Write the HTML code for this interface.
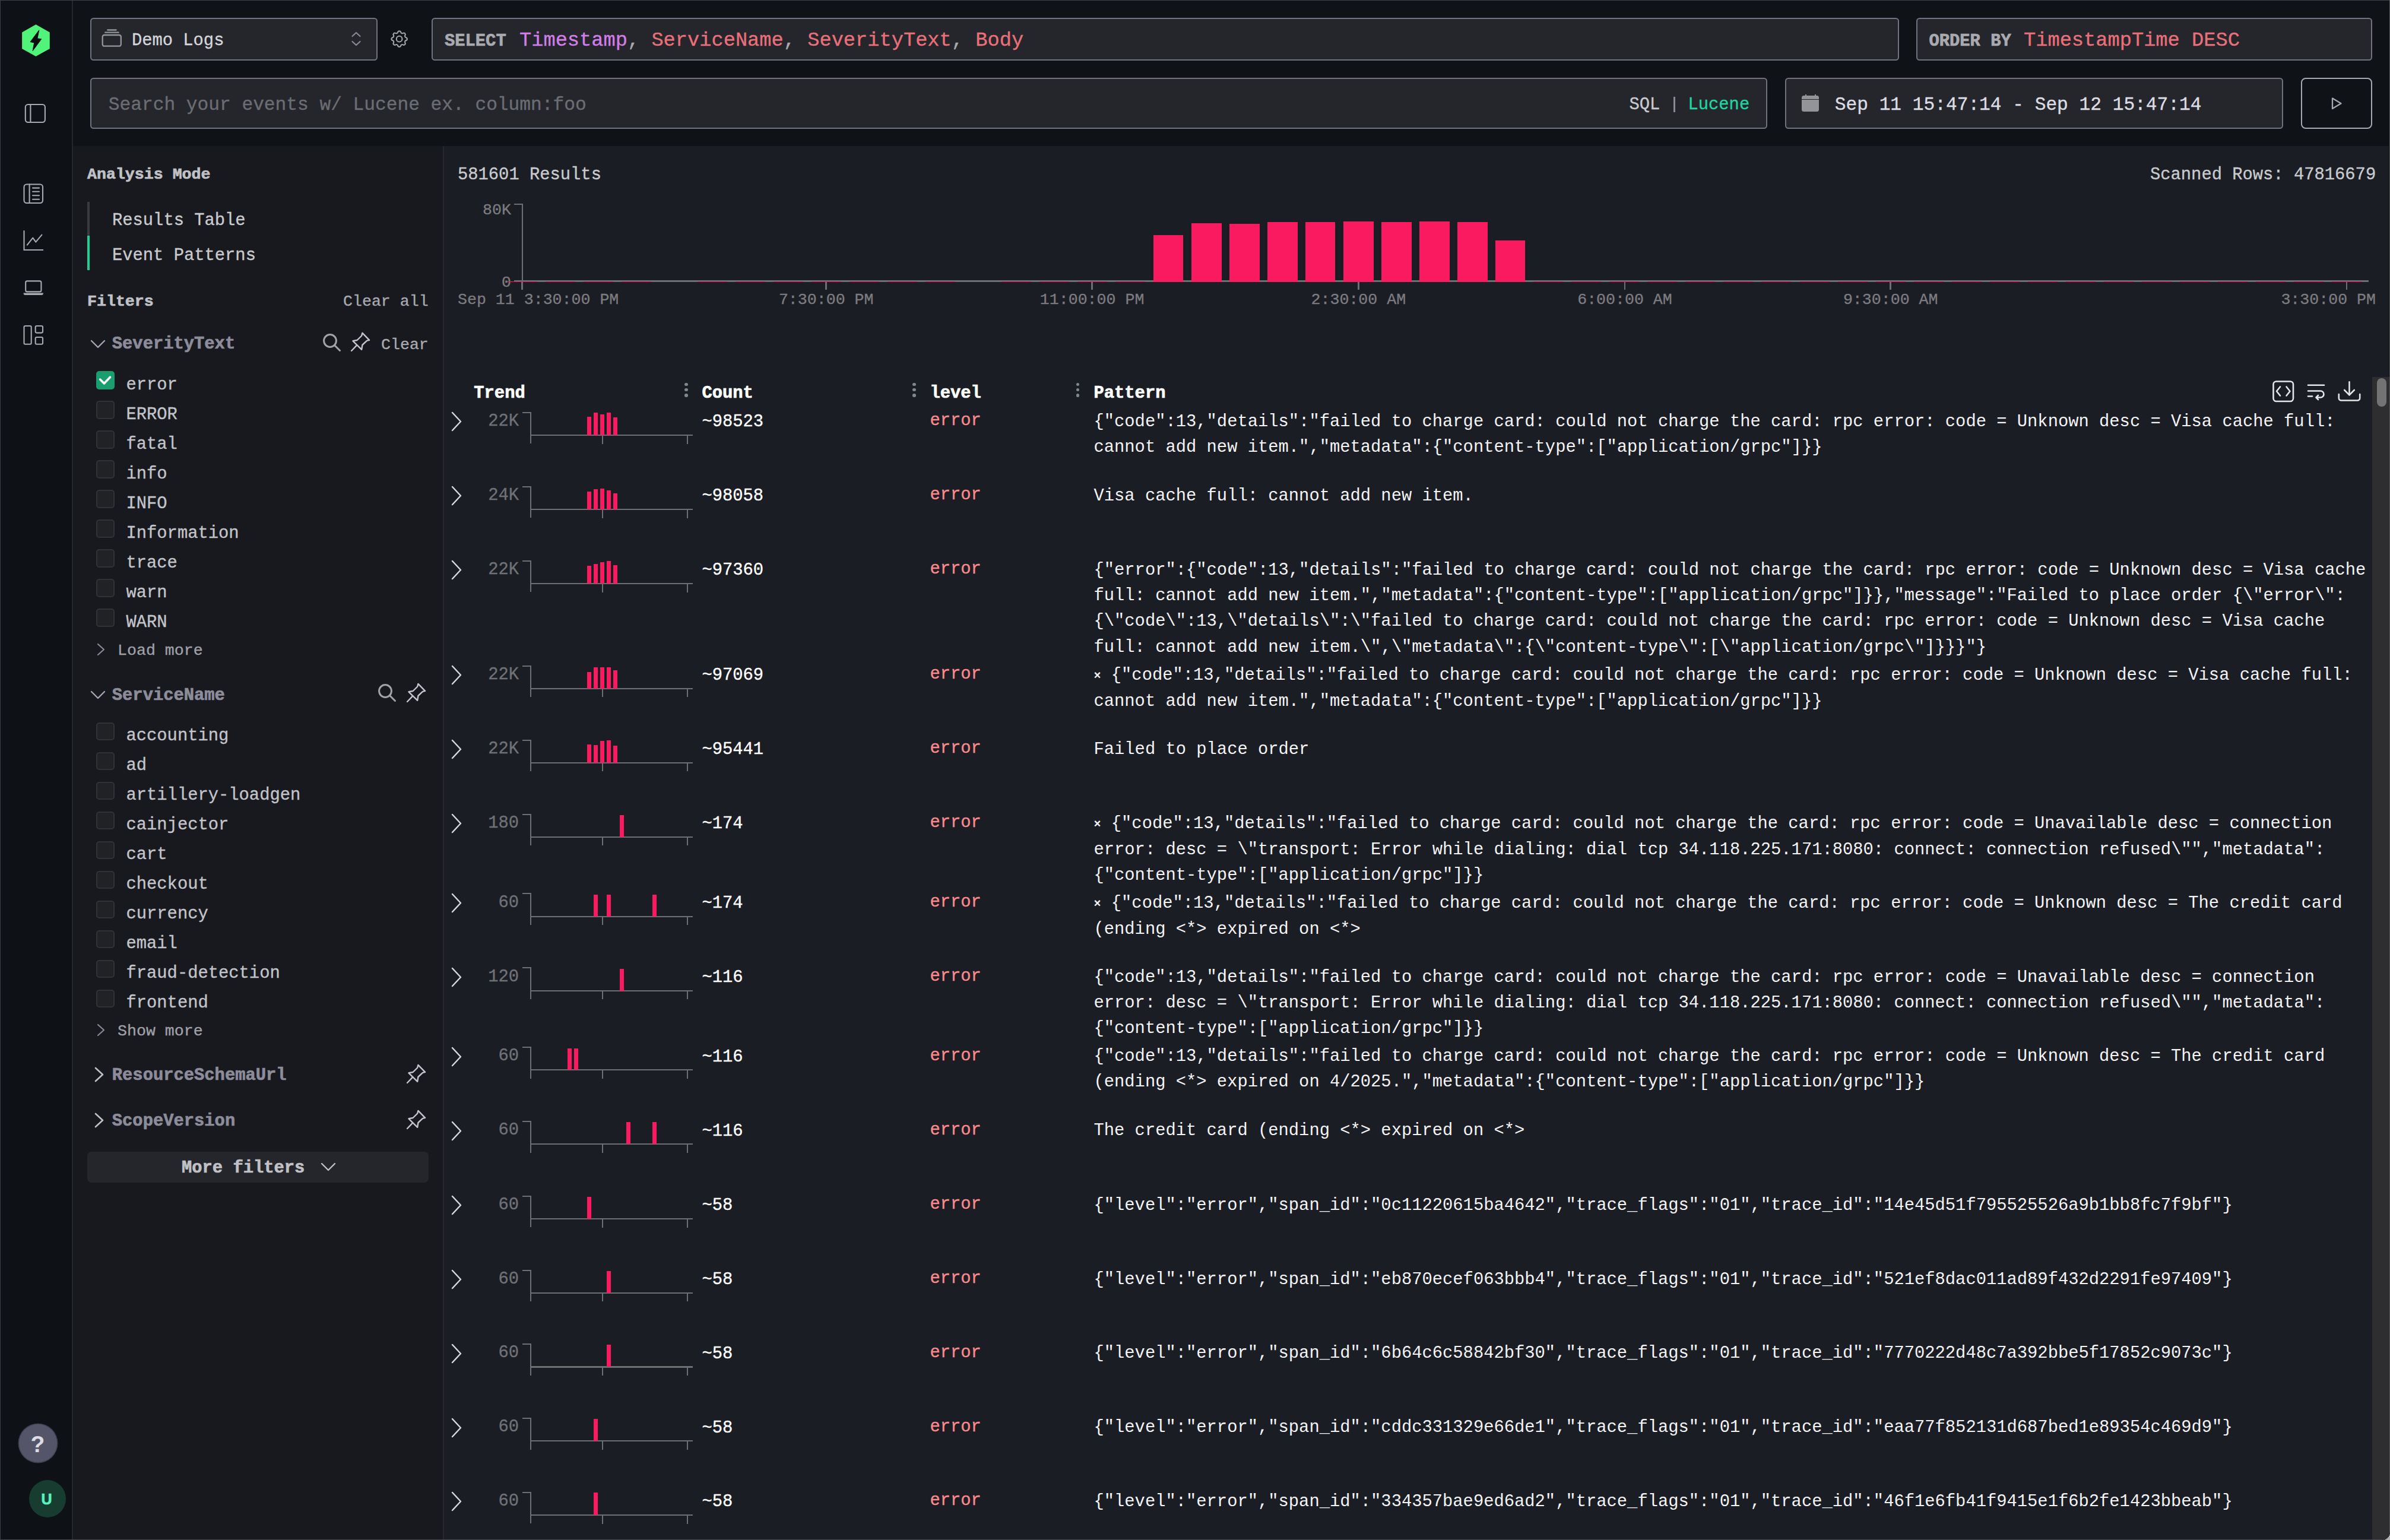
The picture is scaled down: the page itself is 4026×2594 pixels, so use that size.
<!DOCTYPE html><html><head><meta charset="utf-8"><style>*{margin:0;padding:0}html,body{width:4026px;height:2594px;overflow:hidden;background:#0e1116}
.t{position:absolute;white-space:pre}.r{position:absolute}svg.r{overflow:visible}</style></head><body><div class="r" style="left:0.00px;top:0.00px;width:121.00px;height:2594.00px;background:#0e1116"></div><div class="r" style="left:121.00px;top:0.00px;width:2.00px;height:2594.00px;background:#25272c"></div><svg class="r" style="left:30.00px;top:36.00px;" width="60.00" height="64.00" viewBox="0 0 60 64"><polygon points="30.4,6.1 53,19 53,45.7 30.4,58 7.9,45.7 7.9,19" fill="#50f47a" stroke="#50f47a" stroke-width="1.5" stroke-linejoin="round"/><polygon points="35.8,14.8 32.9,28.8 39.7,29.8 25.1,49.6 27.7,35.9 21,34.6" fill="#0b0d10" stroke="#0b0d10" stroke-width="1" stroke-linejoin="round"/></svg><svg class="r" style="left:30.00px;top:160.00px;" width="60.00" height="60.00" viewBox="0 0 60 60"><rect x="12.8" y="16" width="33.1" height="30" rx="4.5" fill="none" stroke="#a9aab1" stroke-width="2.1" stroke-linecap="round" stroke-linejoin="round"/><line x1="21.4" y1="16" x2="21.4" y2="46" fill="none" stroke="#a9aab1" stroke-width="2.1" stroke-linecap="round" stroke-linejoin="round"/></svg><svg class="r" style="left:30.00px;top:300.00px;" width="60.00" height="60.00" viewBox="0 0 60 60"><rect x="10.5" y="10.5" width="31.5" height="31.5" rx="4.5" fill="none" stroke="#a9aab1" stroke-width="2.1" stroke-linecap="round" stroke-linejoin="round"/><line x1="19.6" y1="10.5" x2="19.6" y2="42" fill="none" stroke="#a9aab1" stroke-width="2.1" stroke-linecap="round" stroke-linejoin="round"/><line x1="25" y1="16.6" x2="36" y2="16.6" fill="none" stroke="#a9aab1" stroke-width="2.1" stroke-linecap="round" stroke-linejoin="round"/><line x1="25" y1="22.8" x2="36" y2="22.8" fill="none" stroke="#a9aab1" stroke-width="2.1" stroke-linecap="round" stroke-linejoin="round"/><line x1="25" y1="29.3" x2="36" y2="29.3" fill="none" stroke="#a9aab1" stroke-width="2.1" stroke-linecap="round" stroke-linejoin="round"/><line x1="25" y1="35.7" x2="36" y2="35.7" fill="none" stroke="#a9aab1" stroke-width="2.1" stroke-linecap="round" stroke-linejoin="round"/></svg><svg class="r" style="left:30.00px;top:380.00px;" width="60.00" height="60.00" viewBox="0 0 60 60"><polyline points="10.5,8.3 10.5,41 43,41" fill="none" stroke="#a9aab1" stroke-width="2.1" stroke-linecap="butt" stroke-linejoin="miter"/><polyline points="15.8,32.6 25.3,20.6 30.3,27.6 40.4,15.6" fill="none" stroke="#a9aab1" stroke-width="2.1" stroke-linecap="round" stroke-linejoin="round"/></svg><svg class="r" style="left:30.00px;top:460.00px;" width="60.00" height="60.00" viewBox="0 0 60 60"><rect x="13.2" y="13.4" width="26.2" height="18" rx="2.5" fill="none" stroke="#a9aab1" stroke-width="2.1" stroke-linecap="round" stroke-linejoin="round"/><path d="M9.5 33.5 H43 Q43 37 40 37 H12.5 Q9.5 37 9.5 33.5 Z" fill="#a9aab1"/></svg><svg class="r" style="left:30.00px;top:540.00px;" width="60.00" height="60.00" viewBox="0 0 60 60"><rect x="10.5" y="9" width="12.2" height="30.8" rx="2" fill="none" stroke="#a9aab1" stroke-width="2.1" stroke-linecap="round" stroke-linejoin="round"/><rect x="29.7" y="9" width="12.3" height="11.6" rx="2" fill="none" stroke="#a9aab1" stroke-width="2.1" stroke-linecap="round" stroke-linejoin="round"/><rect x="29.7" y="28" width="12.3" height="11.8" rx="2" fill="none" stroke="#a9aab1" stroke-width="2.1" stroke-linecap="round" stroke-linejoin="round"/></svg><div class="r" style="left:31.50px;top:2398.50px;width:64.00px;height:64.00px;background:#55556a;border-radius:50%;box-shadow:0 0 0 1.5px #3e3e4c"></div><div class="t" style="left:51.50px;top:2412.92px;font-size:39px;line-height:39px;color:#dcdce4;font-weight:700;font-family:'Liberation Sans', sans-serif;-webkit-text-stroke:0px;">?</div><div class="r" style="left:49.00px;top:2493.00px;width:62.00px;height:63.00px;background:#173d31;border-radius:50%"></div><div class="t" style="left:69.50px;top:2512.85px;font-size:25px;line-height:25px;color:#5cf2c0;font-weight:700;font-family:'Liberation Sans', sans-serif;-webkit-text-stroke:0.7px currentColor;">U</div><div class="r" style="left:123.00px;top:0.00px;width:3903.00px;height:246.00px;background:#0f1217"></div><div class="r" style="left:152.00px;top:30.00px;width:484.00px;height:72.00px;background:#25262b;border:2px solid #72717f;border-radius:5.5px;box-sizing:border-box"></div><svg class="r" style="left:160.00px;top:40.00px;" width="55.00" height="52.00" viewBox="0 0 55 52"><rect x="12.7" y="19" width="31.1" height="18.7" rx="3" fill="none" stroke="#939699" stroke-width="2.3" stroke-linecap="round" stroke-linejoin="round"/><line x1="17.2" y1="14.7" x2="39.7" y2="14.7" fill="none" stroke="#939699" stroke-width="2.3" stroke-linecap="round" stroke-linejoin="round"/><line x1="21.2" y1="10.5" x2="35.6" y2="10.5" fill="none" stroke="#939699" stroke-width="2.3" stroke-linecap="round" stroke-linejoin="round"/></svg><div class="t" style="left:221.90px;top:54.94px;font-size:28.8px;line-height:28.8px;color:#d4d5d9;font-weight:400;font-family:'Liberation Mono', monospace;-webkit-text-stroke:0.35px currentColor;">Demo Logs</div><svg class="r" style="left:585.00px;top:50.00px;" width="30.00" height="32.00" viewBox="0 0 30 32"><polyline points="8.5,11 15,5 21.5,11" fill="none" stroke="#8a8b92" stroke-width="2.2" stroke-linecap="round" stroke-linejoin="round"/><polyline points="8.5,20 15,26 21.5,20" fill="none" stroke="#8a8b92" stroke-width="2.2" stroke-linecap="round" stroke-linejoin="round"/></svg><svg class="r" style="left:654.60px;top:47.86px;" width="36.00" height="36.00" viewBox="0 0 36 36"><g transform="scale(1.47)"><path d="M10.325 4.317c.426 -1.756 2.924 -1.756 3.35 0a1.724 1.724 0 0 0 2.573 1.066c1.543 -.94 3.31 .826 2.37 2.37a1.724 1.724 0 0 0 1.065 2.572c1.756 .426 1.756 2.924 0 3.35a1.724 1.724 0 0 0 -1.066 2.573c.94 1.543 -.826 3.31 -2.37 2.37a1.724 1.724 0 0 0 -2.572 1.065c-.426 1.756 -2.924 1.756 -3.35 0a1.724 1.724 0 0 0 -2.573 -1.066c-1.543 .94 -3.31 -.826 -2.37 -2.37a1.724 1.724 0 0 0 -1.065 -2.572c-1.756 -.426 -1.756 -2.924 0 -3.35a1.724 1.724 0 0 0 1.066 -2.573c-.94 -1.543 .826 -3.31 2.37 -2.37c1 .608 2.296 .07 2.572 -1.065z" fill="none" stroke="#a2a3a9" stroke-width="1.45" stroke-linejoin="round"/><circle cx="12" cy="12" r="3.3" fill="none" stroke="#a2a3a9" stroke-width="1.45"/></g></svg><div class="r" style="left:727.00px;top:30.00px;width:2472.00px;height:72.00px;background:#25262b;border:2px solid #72717f;border-radius:5.5px;box-sizing:border-box"></div><div class="t" style="left:749.00px;top:55.94px;font-size:28.8px;line-height:28.8px;color:#a9aab0;font-weight:700;font-family:'Liberation Mono', monospace;-webkit-text-stroke:0.7px currentColor;">SELECT</div><div class="t" style="left:875.00px;top:52.18px;font-size:33.7px;line-height:33.7px;color:#c9cacd;font-weight:400;font-family:'Liberation Mono', monospace;-webkit-text-stroke:0.35px currentColor;"><span style="color:#d27ee8">Timestamp</span><span style="color:#a9aab0">,</span> <span style="color:#e8707a">ServiceName</span><span style="color:#a9aab0">,</span> <span style="color:#e8707a">SeverityText</span><span style="color:#a9aab0">,</span> <span style="color:#e8707a">Body</span></div><div class="r" style="left:3228.00px;top:30.00px;width:768.00px;height:72.00px;background:#25262b;border:2px solid #72717f;border-radius:5.5px;box-sizing:border-box"></div><div class="t" style="left:3249.50px;top:55.94px;font-size:28.8px;line-height:28.8px;color:#a9aab0;font-weight:700;font-family:'Liberation Mono', monospace;-webkit-text-stroke:0.7px currentColor;">ORDER BY</div><div class="t" style="left:3409.00px;top:52.18px;font-size:33.7px;line-height:33.7px;color:#e8707a;font-weight:400;font-family:'Liberation Mono', monospace;-webkit-text-stroke:0.35px currentColor;">TimestampTime DESC</div><div class="r" style="left:152.00px;top:131.00px;width:2825.00px;height:86.00px;background:#25262b;border:2px solid #72717f;border-radius:5.5px;box-sizing:border-box"></div><div class="t" style="left:182.84px;top:160.80px;font-size:31.2px;line-height:31.2px;color:#6b6d74;font-weight:400;font-family:'Liberation Mono', monospace;-webkit-text-stroke:0.35px currentColor;">Search your events w/ Lucene ex. column:foo</div><div class="t" style="left:2744.50px;top:163.14px;font-size:28.8px;line-height:28.8px;color:#c9cacd;font-weight:400;font-family:'Liberation Mono', monospace;-webkit-text-stroke:0.35px currentColor;">SQL</div><div class="r" style="left:2819.10px;top:162.50px;width:2.60px;height:26.20px;background:#8a8b92"></div><div class="t" style="left:2843.50px;top:163.14px;font-size:28.8px;line-height:28.8px;color:#1fd6a0;font-weight:400;font-family:'Liberation Mono', monospace;-webkit-text-stroke:0.35px currentColor;">Lucene</div><div class="r" style="left:3007.00px;top:131.00px;width:839.00px;height:86.00px;background:#25262b;border:2px solid #72717f;border-radius:5.5px;box-sizing:border-box"></div><div class="r" style="left:3035.30px;top:160.80px;width:28.90px;height:27.20px;background:#939497;border-radius:3.5px"></div><div class="r" style="left:3035.30px;top:166.90px;width:28.90px;height:1.30px;background:#25262b"></div><div class="r" style="left:3041.00px;top:158.80px;width:1.60px;height:3.00px;background:#939497"></div><div class="r" style="left:3057.30px;top:158.80px;width:1.60px;height:3.00px;background:#939497"></div><div class="t" style="left:3090.80px;top:161.30px;font-size:31.2px;line-height:31.2px;color:#dcdde3;font-weight:400;font-family:'Liberation Mono', monospace;-webkit-text-stroke:0.35px currentColor;">Sep 11 15:47:14 - Sep 12 15:47:14</div><div class="r" style="left:3876.00px;top:131.00px;width:120.00px;height:86.00px;background:#0f1217;border:2px solid #a8a9b0;border-radius:8px;box-sizing:border-box"></div><svg class="r" style="left:3920.00px;top:160.00px;" width="30.00" height="30.00" viewBox="0 0 30 30"><polygon points="9,5.6 23.5,14.3 9,23" fill="none" stroke="#a8a9b0" stroke-width="2.3" stroke-linejoin="round"/></svg><div class="r" style="left:123.00px;top:246.00px;width:623.00px;height:2348.00px;background:#18191e"></div><div class="r" style="left:746.00px;top:246.00px;width:2.00px;height:2348.00px;background:#26272c"></div><div class="t" style="left:147.00px;top:280.62px;font-size:26.6px;line-height:26.6px;color:#c0c1c6;font-weight:700;font-family:'Liberation Mono', monospace;-webkit-text-stroke:0.7px currentColor;">Analysis Mode</div><div class="r" style="left:147.00px;top:340.00px;width:4.00px;height:57.00px;background:#3a3b40"></div><div class="r" style="left:147.00px;top:397.00px;width:4.00px;height:58.00px;background:#1fcf8f"></div><div class="t" style="left:189.00px;top:357.94px;font-size:28.8px;line-height:28.8px;color:#c9cacd;font-weight:400;font-family:'Liberation Mono', monospace;-webkit-text-stroke:0.35px currentColor;">Results Table</div><div class="t" style="left:189.00px;top:416.64px;font-size:28.8px;line-height:28.8px;color:#c9cacd;font-weight:400;font-family:'Liberation Mono', monospace;-webkit-text-stroke:0.35px currentColor;">Event Patterns</div><div class="t" style="left:147.00px;top:494.62px;font-size:26.6px;line-height:26.6px;color:#c0c1c6;font-weight:700;font-family:'Liberation Mono', monospace;-webkit-text-stroke:0.7px currentColor;">Filters</div><div class="t" style="left:578.00px;top:494.62px;font-size:26.6px;line-height:26.6px;color:#a9aab0;font-weight:400;font-family:'Liberation Mono', monospace;-webkit-text-stroke:0.35px currentColor;">Clear all</div><svg class="r" style="left:152.00px;top:572.00px;" width="26.00" height="16.00" viewBox="0 0 26 16"><polyline points="2,2 13,13 24,2" fill="none" stroke="#a6a7ae" stroke-width="2.4" stroke-linecap="round" stroke-linejoin="round"/></svg><div class="t" style="left:188.80px;top:565.94px;font-size:28.8px;line-height:28.8px;color:#8c8c9a;font-weight:700;font-family:'Liberation Mono', monospace;-webkit-text-stroke:0.7px currentColor;">SeverityText</div><svg class="r" style="left:541.90px;top:560.10px;" width="36.00" height="36.00" viewBox="0 0 36 36"><circle cx="14" cy="14" r="10.4" fill="none" stroke="#a2a3a9" stroke-width="3"/><line x1="21.5" y1="21.5" x2="30.5" y2="30.5" stroke="#a2a3a9" stroke-width="3" stroke-linecap="round"/></svg><svg class="r" style="left:585.90px;top:555.40px;" width="40.00" height="40.00" viewBox="0 0 40 40"><polygon points="8.50,19.30 15.60,18.00 23.20,10.50 24.40,5.90 36.10,17.80 32.00,18.90 24.40,26.00 23.20,33.90" fill="none" stroke="#c4c5cc" stroke-width="2.4" stroke-linejoin="round"/><line x1="15.20" y1="26.40" x2="6" y2="36" stroke="#c4c5cc" stroke-width="2.4" stroke-linecap="round"/></svg><div class="t" style="left:642.00px;top:567.62px;font-size:26.6px;line-height:26.6px;color:#a9aab0;font-weight:400;font-family:'Liberation Mono', monospace;-webkit-text-stroke:0.35px currentColor;">Clear</div><div class="r" style="left:162.20px;top:625.30px;width:30.40px;height:30.40px;background:#1a9e70;border-radius:5px"></div><svg class="r" style="left:162.20px;top:625.30px;" width="30.40" height="30.40" viewBox="0 0 30.4 30.4"><polyline points="6.6,14.1 13.4,20.9 23.5,10.2" fill="none" stroke="#fff" stroke-width="3.6" stroke-linecap="round" stroke-linejoin="round"/></svg><div class="t" style="left:212.50px;top:634.64px;font-size:28.8px;line-height:28.8px;color:#c3c4c9;font-weight:400;font-family:'Liberation Mono', monospace;-webkit-text-stroke:0.35px currentColor;">error</div><div class="r" style="left:162.20px;top:675.30px;width:30.40px;height:30.40px;background:#212226;border:2px solid #303236;border-radius:5px;box-sizing:border-box"></div><div class="t" style="left:212.50px;top:684.64px;font-size:28.8px;line-height:28.8px;color:#c3c4c9;font-weight:400;font-family:'Liberation Mono', monospace;-webkit-text-stroke:0.35px currentColor;">ERROR</div><div class="r" style="left:162.20px;top:725.30px;width:30.40px;height:30.40px;background:#212226;border:2px solid #303236;border-radius:5px;box-sizing:border-box"></div><div class="t" style="left:212.50px;top:734.64px;font-size:28.8px;line-height:28.8px;color:#c3c4c9;font-weight:400;font-family:'Liberation Mono', monospace;-webkit-text-stroke:0.35px currentColor;">fatal</div><div class="r" style="left:162.20px;top:775.30px;width:30.40px;height:30.40px;background:#212226;border:2px solid #303236;border-radius:5px;box-sizing:border-box"></div><div class="t" style="left:212.50px;top:784.64px;font-size:28.8px;line-height:28.8px;color:#c3c4c9;font-weight:400;font-family:'Liberation Mono', monospace;-webkit-text-stroke:0.35px currentColor;">info</div><div class="r" style="left:162.20px;top:825.30px;width:30.40px;height:30.40px;background:#212226;border:2px solid #303236;border-radius:5px;box-sizing:border-box"></div><div class="t" style="left:212.50px;top:834.64px;font-size:28.8px;line-height:28.8px;color:#c3c4c9;font-weight:400;font-family:'Liberation Mono', monospace;-webkit-text-stroke:0.35px currentColor;">INFO</div><div class="r" style="left:162.20px;top:875.30px;width:30.40px;height:30.40px;background:#212226;border:2px solid #303236;border-radius:5px;box-sizing:border-box"></div><div class="t" style="left:212.50px;top:884.64px;font-size:28.8px;line-height:28.8px;color:#c3c4c9;font-weight:400;font-family:'Liberation Mono', monospace;-webkit-text-stroke:0.35px currentColor;">Information</div><div class="r" style="left:162.20px;top:925.30px;width:30.40px;height:30.40px;background:#212226;border:2px solid #303236;border-radius:5px;box-sizing:border-box"></div><div class="t" style="left:212.50px;top:934.64px;font-size:28.8px;line-height:28.8px;color:#c3c4c9;font-weight:400;font-family:'Liberation Mono', monospace;-webkit-text-stroke:0.35px currentColor;">trace</div><div class="r" style="left:162.20px;top:975.30px;width:30.40px;height:30.40px;background:#212226;border:2px solid #303236;border-radius:5px;box-sizing:border-box"></div><div class="t" style="left:212.50px;top:984.64px;font-size:28.8px;line-height:28.8px;color:#c3c4c9;font-weight:400;font-family:'Liberation Mono', monospace;-webkit-text-stroke:0.35px currentColor;">warn</div><div class="r" style="left:162.20px;top:1025.30px;width:30.40px;height:30.40px;background:#212226;border:2px solid #303236;border-radius:5px;box-sizing:border-box"></div><div class="t" style="left:212.50px;top:1034.64px;font-size:28.8px;line-height:28.8px;color:#c3c4c9;font-weight:400;font-family:'Liberation Mono', monospace;-webkit-text-stroke:0.35px currentColor;">WARN</div><svg class="r" style="left:163.00px;top:1083.00px;" width="14.00" height="22.00" viewBox="0 0 14 22"><polyline points="2,2 12,11.0 2,20" fill="none" stroke="#8a8b92" stroke-width="2.2" stroke-linecap="round" stroke-linejoin="round"/></svg><div class="t" style="left:198.00px;top:1082.62px;font-size:26.6px;line-height:26.6px;color:#a0a1a8;font-weight:400;font-family:'Liberation Mono', monospace;-webkit-text-stroke:0.35px currentColor;">Load more</div><svg class="r" style="left:152.00px;top:1163.00px;" width="26.00" height="16.00" viewBox="0 0 26 16"><polyline points="2,2 13,13 24,2" fill="none" stroke="#a6a7ae" stroke-width="2.4" stroke-linecap="round" stroke-linejoin="round"/></svg><div class="t" style="left:188.80px;top:1157.94px;font-size:28.8px;line-height:28.8px;color:#8c8c9a;font-weight:700;font-family:'Liberation Mono', monospace;-webkit-text-stroke:0.7px currentColor;">ServiceName</div><svg class="r" style="left:634.80px;top:1150.40px;" width="36.00" height="36.00" viewBox="0 0 36 36"><circle cx="14" cy="14" r="10.4" fill="none" stroke="#a2a3a9" stroke-width="3"/><line x1="21.5" y1="21.5" x2="30.5" y2="30.5" stroke="#a2a3a9" stroke-width="3" stroke-linecap="round"/></svg><svg class="r" style="left:680.10px;top:1145.70px;" width="40.00" height="40.00" viewBox="0 0 40 40"><polygon points="8.50,19.30 15.60,18.00 23.20,10.50 24.40,5.90 36.10,17.80 32.00,18.90 24.40,26.00 23.20,33.90" fill="none" stroke="#c4c5cc" stroke-width="2.4" stroke-linejoin="round"/><line x1="15.20" y1="26.40" x2="6" y2="36" stroke="#c4c5cc" stroke-width="2.4" stroke-linecap="round"/></svg><div class="r" style="left:162.20px;top:1217.00px;width:30.40px;height:30.40px;background:#212226;border:2px solid #303236;border-radius:5px;box-sizing:border-box"></div><div class="t" style="left:212.50px;top:1226.34px;font-size:28.8px;line-height:28.8px;color:#c3c4c9;font-weight:400;font-family:'Liberation Mono', monospace;-webkit-text-stroke:0.35px currentColor;">accounting</div><div class="r" style="left:162.20px;top:1267.00px;width:30.40px;height:30.40px;background:#212226;border:2px solid #303236;border-radius:5px;box-sizing:border-box"></div><div class="t" style="left:212.50px;top:1276.34px;font-size:28.8px;line-height:28.8px;color:#c3c4c9;font-weight:400;font-family:'Liberation Mono', monospace;-webkit-text-stroke:0.35px currentColor;">ad</div><div class="r" style="left:162.20px;top:1317.00px;width:30.40px;height:30.40px;background:#212226;border:2px solid #303236;border-radius:5px;box-sizing:border-box"></div><div class="t" style="left:212.50px;top:1326.34px;font-size:28.8px;line-height:28.8px;color:#c3c4c9;font-weight:400;font-family:'Liberation Mono', monospace;-webkit-text-stroke:0.35px currentColor;">artillery-loadgen</div><div class="r" style="left:162.20px;top:1367.00px;width:30.40px;height:30.40px;background:#212226;border:2px solid #303236;border-radius:5px;box-sizing:border-box"></div><div class="t" style="left:212.50px;top:1376.34px;font-size:28.8px;line-height:28.8px;color:#c3c4c9;font-weight:400;font-family:'Liberation Mono', monospace;-webkit-text-stroke:0.35px currentColor;">cainjector</div><div class="r" style="left:162.20px;top:1417.00px;width:30.40px;height:30.40px;background:#212226;border:2px solid #303236;border-radius:5px;box-sizing:border-box"></div><div class="t" style="left:212.50px;top:1426.34px;font-size:28.8px;line-height:28.8px;color:#c3c4c9;font-weight:400;font-family:'Liberation Mono', monospace;-webkit-text-stroke:0.35px currentColor;">cart</div><div class="r" style="left:162.20px;top:1467.00px;width:30.40px;height:30.40px;background:#212226;border:2px solid #303236;border-radius:5px;box-sizing:border-box"></div><div class="t" style="left:212.50px;top:1476.34px;font-size:28.8px;line-height:28.8px;color:#c3c4c9;font-weight:400;font-family:'Liberation Mono', monospace;-webkit-text-stroke:0.35px currentColor;">checkout</div><div class="r" style="left:162.20px;top:1517.00px;width:30.40px;height:30.40px;background:#212226;border:2px solid #303236;border-radius:5px;box-sizing:border-box"></div><div class="t" style="left:212.50px;top:1526.34px;font-size:28.8px;line-height:28.8px;color:#c3c4c9;font-weight:400;font-family:'Liberation Mono', monospace;-webkit-text-stroke:0.35px currentColor;">currency</div><div class="r" style="left:162.20px;top:1567.00px;width:30.40px;height:30.40px;background:#212226;border:2px solid #303236;border-radius:5px;box-sizing:border-box"></div><div class="t" style="left:212.50px;top:1576.34px;font-size:28.8px;line-height:28.8px;color:#c3c4c9;font-weight:400;font-family:'Liberation Mono', monospace;-webkit-text-stroke:0.35px currentColor;">email</div><div class="r" style="left:162.20px;top:1617.00px;width:30.40px;height:30.40px;background:#212226;border:2px solid #303236;border-radius:5px;box-sizing:border-box"></div><div class="t" style="left:212.50px;top:1626.34px;font-size:28.8px;line-height:28.8px;color:#c3c4c9;font-weight:400;font-family:'Liberation Mono', monospace;-webkit-text-stroke:0.35px currentColor;">fraud-detection</div><div class="r" style="left:162.20px;top:1667.00px;width:30.40px;height:30.40px;background:#212226;border:2px solid #303236;border-radius:5px;box-sizing:border-box"></div><div class="t" style="left:212.50px;top:1676.34px;font-size:28.8px;line-height:28.8px;color:#c3c4c9;font-weight:400;font-family:'Liberation Mono', monospace;-webkit-text-stroke:0.35px currentColor;">frontend</div><svg class="r" style="left:163.00px;top:1724.00px;" width="14.00" height="22.00" viewBox="0 0 14 22"><polyline points="2,2 12,11.0 2,20" fill="none" stroke="#8a8b92" stroke-width="2.2" stroke-linecap="round" stroke-linejoin="round"/></svg><div class="t" style="left:198.00px;top:1724.12px;font-size:26.6px;line-height:26.6px;color:#a0a1a8;font-weight:400;font-family:'Liberation Mono', monospace;-webkit-text-stroke:0.35px currentColor;">Show more</div><svg class="r" style="left:159.00px;top:1797.00px;" width="16.00" height="26.00" viewBox="0 0 16 26"><polyline points="2,2 14,13.0 2,24" fill="none" stroke="#c0c1c6" stroke-width="2.6" stroke-linecap="round" stroke-linejoin="round"/></svg><div class="t" style="left:188.80px;top:1798.24px;font-size:28.8px;line-height:28.8px;color:#8c8c9a;font-weight:700;font-family:'Liberation Mono', monospace;-webkit-text-stroke:0.7px currentColor;">ResourceSchemaUrl</div><svg class="r" style="left:680.10px;top:1787.60px;" width="40.00" height="40.00" viewBox="0 0 40 40"><polygon points="8.50,19.30 15.60,18.00 23.20,10.50 24.40,5.90 36.10,17.80 32.00,18.90 24.40,26.00 23.20,33.90" fill="none" stroke="#c4c5cc" stroke-width="2.4" stroke-linejoin="round"/><line x1="15.20" y1="26.40" x2="6" y2="36" stroke="#c4c5cc" stroke-width="2.4" stroke-linecap="round"/></svg><svg class="r" style="left:159.00px;top:1874.00px;" width="16.00" height="26.00" viewBox="0 0 16 26"><polyline points="2,2 14,13.0 2,24" fill="none" stroke="#c0c1c6" stroke-width="2.6" stroke-linecap="round" stroke-linejoin="round"/></svg><div class="t" style="left:188.80px;top:1875.14px;font-size:28.8px;line-height:28.8px;color:#8c8c9a;font-weight:700;font-family:'Liberation Mono', monospace;-webkit-text-stroke:0.7px currentColor;">ScopeVersion</div><svg class="r" style="left:680.10px;top:1864.60px;" width="40.00" height="40.00" viewBox="0 0 40 40"><polygon points="8.50,19.30 15.60,18.00 23.20,10.50 24.40,5.90 36.10,17.80 32.00,18.90 24.40,26.00 23.20,33.90" fill="none" stroke="#c4c5cc" stroke-width="2.4" stroke-linejoin="round"/><line x1="15.20" y1="26.40" x2="6" y2="36" stroke="#c4c5cc" stroke-width="2.4" stroke-linecap="round"/></svg><div class="r" style="left:147.00px;top:1939.50px;width:575.00px;height:52.50px;background:#25262b;border-radius:7px"></div><div class="t" style="left:306.00px;top:1953.94px;font-size:28.8px;line-height:28.8px;color:#c0c1c6;font-weight:700;font-family:'Liberation Mono', monospace;-webkit-text-stroke:0.7px currentColor;">More filters</div><svg class="r" style="left:540.00px;top:1958.00px;" width="26.00" height="16.00" viewBox="0 0 26 16"><polyline points="2,2 13,13 24,2" fill="none" stroke="#c0c1c6" stroke-width="2.4" stroke-linecap="round" stroke-linejoin="round"/></svg><div class="r" style="left:748.00px;top:246.00px;width:3276.00px;height:2348.00px;background:#1b1d24"></div><div class="t" style="left:771.00px;top:280.74px;font-size:28.8px;line-height:28.8px;color:#c9cacd;font-weight:400;font-family:'Liberation Mono', monospace;-webkit-text-stroke:0.35px currentColor;">581601 Results</div><div class="t" style="left:3622.00px;top:280.54px;font-size:28.8px;line-height:28.8px;color:#c9cacd;font-weight:400;font-family:'Liberation Mono', monospace;-webkit-text-stroke:0.35px currentColor;">Scanned Rows: 47816679</div><div class="r" style="left:878.80px;top:343.00px;width:2.30px;height:145.00px;background:#6e6f73"></div><div class="r" style="left:865.90px;top:343.00px;width:15.00px;height:2.00px;background:#6e6f73"></div><div class="r" style="left:865.90px;top:472.30px;width:14.00px;height:2.40px;background:#6e6f73"></div><div class="r" style="left:878.60px;top:472.30px;width:3111.40px;height:2.40px;background:#6e6f73"></div><div class="t" style="left:813.00px;top:340.62px;font-size:26.6px;line-height:26.6px;color:#7c7c80;font-weight:400;font-family:'Liberation Mono', monospace;-webkit-text-stroke:0.35px currentColor;">80K</div><div class="t" style="left:845.00px;top:462.62px;font-size:26.6px;line-height:26.6px;color:#7c7c80;font-weight:400;font-family:'Liberation Mono', monospace;-webkit-text-stroke:0.35px currentColor;">0</div><div class="r" style="left:854.50px;top:473.70px;width:50.00px;height:1.40px;background:#ee185c"></div><div class="r" style="left:918.53px;top:473.70px;width:50.00px;height:1.40px;background:#ee185c"></div><div class="r" style="left:982.56px;top:473.70px;width:50.00px;height:1.40px;background:#ee185c"></div><div class="r" style="left:1046.59px;top:473.70px;width:50.00px;height:1.40px;background:#ee185c"></div><div class="r" style="left:1174.65px;top:473.70px;width:50.00px;height:1.40px;background:#ee185c"></div><div class="r" style="left:1238.68px;top:473.70px;width:50.00px;height:1.40px;background:#ee185c"></div><div class="r" style="left:1302.71px;top:473.70px;width:50.00px;height:1.40px;background:#ee185c"></div><div class="r" style="left:1366.74px;top:473.70px;width:50.00px;height:1.40px;background:#ee185c"></div><div class="r" style="left:1430.77px;top:473.70px;width:50.00px;height:1.40px;background:#ee185c"></div><div class="r" style="left:1494.80px;top:473.70px;width:50.00px;height:1.40px;background:#ee185c"></div><div class="r" style="left:1558.83px;top:473.70px;width:50.00px;height:1.40px;background:#ee185c"></div><div class="r" style="left:1686.89px;top:473.70px;width:50.00px;height:1.40px;background:#ee185c"></div><div class="r" style="left:1750.92px;top:473.70px;width:50.00px;height:1.40px;background:#ee185c"></div><div class="r" style="left:1814.95px;top:473.70px;width:50.00px;height:1.40px;background:#ee185c"></div><div class="r" style="left:1878.98px;top:473.70px;width:50.00px;height:1.40px;background:#ee185c"></div><div class="r" style="left:2583.31px;top:473.70px;width:50.00px;height:1.40px;background:#ee185c"></div><div class="r" style="left:2647.34px;top:473.70px;width:50.00px;height:1.40px;background:#ee185c"></div><div class="r" style="left:2711.37px;top:473.70px;width:50.00px;height:1.40px;background:#ee185c"></div><div class="r" style="left:2775.40px;top:473.70px;width:50.00px;height:1.40px;background:#ee185c"></div><div class="r" style="left:2839.43px;top:473.70px;width:50.00px;height:1.40px;background:#ee185c"></div><div class="r" style="left:2903.46px;top:473.70px;width:50.00px;height:1.40px;background:#ee185c"></div><div class="r" style="left:2967.49px;top:473.70px;width:50.00px;height:1.40px;background:#ee185c"></div><div class="r" style="left:3031.52px;top:473.70px;width:50.00px;height:1.40px;background:#ee185c"></div><div class="r" style="left:3095.55px;top:473.70px;width:50.00px;height:1.40px;background:#ee185c"></div><div class="r" style="left:3159.58px;top:473.70px;width:50.00px;height:1.40px;background:#ee185c"></div><div class="r" style="left:3223.61px;top:473.70px;width:50.00px;height:1.40px;background:#ee185c"></div><div class="r" style="left:3287.64px;top:473.70px;width:50.00px;height:1.40px;background:#ee185c"></div><div class="r" style="left:3351.67px;top:473.70px;width:50.00px;height:1.40px;background:#ee185c"></div><div class="r" style="left:3415.70px;top:473.70px;width:50.00px;height:1.40px;background:#ee185c"></div><div class="r" style="left:3479.73px;top:473.70px;width:50.00px;height:1.40px;background:#ee185c"></div><div class="r" style="left:3543.76px;top:473.70px;width:50.00px;height:1.40px;background:#ee185c"></div><div class="r" style="left:3607.79px;top:473.70px;width:50.00px;height:1.40px;background:#ee185c"></div><div class="r" style="left:3671.82px;top:473.70px;width:50.00px;height:1.40px;background:#ee185c"></div><div class="r" style="left:3735.85px;top:473.70px;width:50.00px;height:1.40px;background:#ee185c"></div><div class="r" style="left:3799.88px;top:473.70px;width:50.00px;height:1.40px;background:#ee185c"></div><div class="r" style="left:3863.91px;top:473.70px;width:50.00px;height:1.40px;background:#ee185c"></div><div class="r" style="left:3927.94px;top:473.70px;width:50.00px;height:1.40px;background:#ee185c"></div><div class="r" style="left:1942.80px;top:395.90px;width:50.50px;height:78.70px;background:#f91a5f"></div><div class="r" style="left:2007.10px;top:375.80px;width:50.50px;height:98.80px;background:#f91a5f"></div><div class="r" style="left:2071.00px;top:376.80px;width:50.50px;height:97.80px;background:#f91a5f"></div><div class="r" style="left:2135.00px;top:373.80px;width:50.50px;height:100.80px;background:#f91a5f"></div><div class="r" style="left:2198.90px;top:373.80px;width:50.50px;height:100.80px;background:#f91a5f"></div><div class="r" style="left:2263.20px;top:372.80px;width:50.50px;height:101.80px;background:#f91a5f"></div><div class="r" style="left:2327.10px;top:373.80px;width:50.50px;height:100.80px;background:#f91a5f"></div><div class="r" style="left:2391.00px;top:372.80px;width:50.50px;height:101.80px;background:#f91a5f"></div><div class="r" style="left:2455.00px;top:373.80px;width:50.50px;height:100.80px;background:#f91a5f"></div><div class="r" style="left:2518.90px;top:404.90px;width:50.50px;height:69.70px;background:#f91a5f"></div><div class="r" style="left:878.30px;top:475.00px;width:2.70px;height:13.00px;background:#6e6f73"></div><div class="t" style="left:771.00px;top:491.62px;font-size:26.6px;line-height:26.6px;color:#7c7c80;font-weight:400;font-family:'Liberation Mono', monospace;-webkit-text-stroke:0.35px currentColor;">Sep 11 3:30:00 PM</div><div class="r" style="left:1390.40px;top:475.00px;width:2.70px;height:13.00px;background:#6e6f73"></div><div class="t" style="left:1311.90px;top:491.62px;font-size:26.6px;line-height:26.6px;color:#7c7c80;font-weight:400;font-family:'Liberation Mono', monospace;-webkit-text-stroke:0.35px currentColor;">7:30:00 PM</div><div class="r" style="left:1838.30px;top:475.00px;width:2.70px;height:13.00px;background:#6e6f73"></div><div class="t" style="left:1751.82px;top:491.62px;font-size:26.6px;line-height:26.6px;color:#7c7c80;font-weight:400;font-family:'Liberation Mono', monospace;-webkit-text-stroke:0.35px currentColor;">11:00:00 PM</div><div class="r" style="left:2287.00px;top:475.00px;width:2.70px;height:13.00px;background:#6e6f73"></div><div class="t" style="left:2208.50px;top:491.62px;font-size:26.6px;line-height:26.6px;color:#7c7c80;font-weight:400;font-family:'Liberation Mono', monospace;-webkit-text-stroke:0.35px currentColor;">2:30:00 AM</div><div class="r" style="left:2735.70px;top:475.00px;width:2.70px;height:13.00px;background:#6e6f73"></div><div class="t" style="left:2657.20px;top:491.62px;font-size:26.6px;line-height:26.6px;color:#7c7c80;font-weight:400;font-family:'Liberation Mono', monospace;-webkit-text-stroke:0.35px currentColor;">6:00:00 AM</div><div class="r" style="left:3183.40px;top:475.00px;width:2.70px;height:13.00px;background:#6e6f73"></div><div class="t" style="left:3104.90px;top:491.62px;font-size:26.6px;line-height:26.6px;color:#7c7c80;font-weight:400;font-family:'Liberation Mono', monospace;-webkit-text-stroke:0.35px currentColor;">9:30:00 AM</div><div class="r" style="left:3951.70px;top:475.00px;width:2.70px;height:13.00px;background:#6e6f73"></div><div class="t" style="left:3842.40px;top:491.62px;font-size:26.6px;line-height:26.6px;color:#7c7c80;font-weight:400;font-family:'Liberation Mono', monospace;-webkit-text-stroke:0.35px currentColor;">3:30:00 PM</div><div class="t" style="left:798.30px;top:648.94px;font-size:28.8px;line-height:28.8px;color:#ffffff;font-weight:700;font-family:'Liberation Mono', monospace;-webkit-text-stroke:0.7px currentColor;">Trend</div><div class="t" style="left:1182.50px;top:648.94px;font-size:28.8px;line-height:28.8px;color:#ffffff;font-weight:700;font-family:'Liberation Mono', monospace;-webkit-text-stroke:0.7px currentColor;">Count</div><div class="t" style="left:1566.50px;top:648.94px;font-size:28.8px;line-height:28.8px;color:#ffffff;font-weight:700;font-family:'Liberation Mono', monospace;-webkit-text-stroke:0.7px currentColor;">level</div><div class="t" style="left:1842.50px;top:648.94px;font-size:28.8px;line-height:28.8px;color:#ffffff;font-weight:700;font-family:'Liberation Mono', monospace;-webkit-text-stroke:0.7px currentColor;">Pattern</div><div class="r" style="left:1153.20px;top:644.80px;width:5.60px;height:5.60px;background:#80868f;border-radius:50%"></div><div class="r" style="left:1153.20px;top:653.90px;width:5.60px;height:5.60px;background:#80868f;border-radius:50%"></div><div class="r" style="left:1153.20px;top:663.00px;width:5.60px;height:5.60px;background:#80868f;border-radius:50%"></div><div class="r" style="left:1537.20px;top:644.80px;width:5.60px;height:5.60px;background:#80868f;border-radius:50%"></div><div class="r" style="left:1537.20px;top:653.90px;width:5.60px;height:5.60px;background:#80868f;border-radius:50%"></div><div class="r" style="left:1537.20px;top:663.00px;width:5.60px;height:5.60px;background:#80868f;border-radius:50%"></div><div class="r" style="left:1812.80px;top:644.80px;width:5.60px;height:5.60px;background:#80868f;border-radius:50%"></div><div class="r" style="left:1812.80px;top:653.90px;width:5.60px;height:5.60px;background:#80868f;border-radius:50%"></div><div class="r" style="left:1812.80px;top:663.00px;width:5.60px;height:5.60px;background:#80868f;border-radius:50%"></div><svg class="r" style="left:3820.00px;top:638.00px;overflow:visible" width="40.00" height="40.00" viewBox="0 0 40 40"><rect x="9.5" y="4.5" width="33.5" height="33.5" rx="5" fill="none" stroke="#e6e6e8" stroke-width="2.6" stroke-linecap="round" stroke-linejoin="round"/><polyline points="21,13.5 15,21 21,28.5" fill="none" stroke="#e6e6e8" stroke-width="2.6" stroke-linecap="round" stroke-linejoin="round"/><polyline points="31.5,13.5 37.5,21 31.5,28.5" fill="none" stroke="#e6e6e8" stroke-width="2.6" stroke-linecap="round" stroke-linejoin="round"/></svg><svg class="r" style="left:3880.00px;top:640.00px;" width="40.00" height="40.00" viewBox="0 0 40 40"><line x1="8" y1="8.7" x2="35" y2="8.7" fill="none" stroke="#e6e6e8" stroke-width="2.6" stroke-linecap="round" stroke-linejoin="round"/><path d="M8 18.5 H29 A5.5 5.5 0 0 1 29 29.5 H22" fill="none" stroke="#e6e6e8" stroke-width="2.6" stroke-linecap="round" stroke-linejoin="round"/><polyline points="25,26 21.5,29.5 25,33" fill="none" stroke="#e6e6e8" stroke-width="2.6" stroke-linecap="round" stroke-linejoin="round"/><line x1="8" y1="27.5" x2="15" y2="27.5" fill="none" stroke="#e6e6e8" stroke-width="2.6" stroke-linecap="round" stroke-linejoin="round"/></svg><svg class="r" style="left:3935.00px;top:640.00px;" width="40.00" height="40.00" viewBox="0 0 40 40"><path d="M4.8 24 V30.5 A4 4 0 0 0 8.8 34.5 H36.2 A4 4 0 0 0 40.2 30.5 V24" fill="none" stroke="#e6e6e8" stroke-width="2.6" stroke-linecap="round" stroke-linejoin="round"/><polyline points="14.2,17 22.5,25.3 30.8,17" fill="none" stroke="#e6e6e8" stroke-width="2.6" stroke-linecap="round" stroke-linejoin="round"/><line x1="22.5" y1="3.2" x2="22.5" y2="25.3" fill="none" stroke="#e6e6e8" stroke-width="2.6" stroke-linecap="round" stroke-linejoin="round"/></svg><div class="r" style="left:3996.00px;top:635.00px;width:29.00px;height:1959.00px;background:#2e2e30"></div><div class="r" style="left:4004.00px;top:637.00px;width:16.00px;height:48.00px;background:#737373;border-radius:8px"></div><svg class="r" style="left:760.00px;top:693.40px;" width="18.00" height="34.00" viewBox="0 0 18 34"><polyline points="2,2 16,17.0 2,32" fill="none" stroke="#d8d9dd" stroke-width="2.4" stroke-linecap="round" stroke-linejoin="round"/></svg><div class="t" style="left:822.16px;top:695.94px;font-size:28.8px;line-height:28.8px;color:#707176;font-weight:400;font-family:'Liberation Mono', monospace;-webkit-text-stroke:0.35px currentColor;">22K</div><div class="r" style="left:892.90px;top:693.80px;width:2.10px;height:53.50px;background:#6e6f73"></div><div class="r" style="left:880.00px;top:693.80px;width:14.00px;height:2.10px;background:#6e6f73"></div><div class="r" style="left:892.90px;top:731.95px;width:274.00px;height:2.10px;background:#6e6f73"></div><div class="r" style="left:1014.20px;top:733.00px;width:2.10px;height:14.50px;background:#6e6f73"></div><div class="r" style="left:1157.40px;top:733.00px;width:2.10px;height:14.50px;background:#6e6f73"></div><div class="r" style="left:988.90px;top:702.00px;width:7.00px;height:31.00px;background:#f91a5f"></div><div class="r" style="left:1000.00px;top:695.10px;width:7.00px;height:37.90px;background:#f91a5f"></div><div class="r" style="left:1011.30px;top:698.20px;width:7.00px;height:34.80px;background:#f91a5f"></div><div class="r" style="left:1022.00px;top:695.10px;width:7.00px;height:37.90px;background:#f91a5f"></div><div class="r" style="left:1032.50px;top:702.60px;width:7.00px;height:30.40px;background:#f91a5f"></div><div class="t" style="left:1182.40px;top:697.34px;font-size:28.8px;line-height:28.8px;color:#ffffff;font-weight:400;font-family:'Liberation Mono', monospace;-webkit-text-stroke:0.35px currentColor;">~98523</div><div class="t" style="left:1566.40px;top:695.44px;font-size:28.8px;line-height:28.8px;color:#fb8a8c;font-weight:400;font-family:'Liberation Mono', monospace;-webkit-text-stroke:0.35px currentColor;">error</div><div class="t" style="left:1842.50px;top:688.94px;font-size:28.8px;line-height:43.2px;color:#f4f4f6;font-weight:400;font-family:'Liberation Mono', monospace;white-space:pre-webkit-text-stroke:0.35px currentColor;">{"code":13,"details":"failed to charge card: could not charge the card: rpc error: code = Unknown desc = Visa cache full:<br>cannot add new item.","metadata":{"content-type":["application/grpc"]}}</div><svg class="r" style="left:760.00px;top:818.40px;" width="18.00" height="34.00" viewBox="0 0 18 34"><polyline points="2,2 16,17.0 2,32" fill="none" stroke="#d8d9dd" stroke-width="2.4" stroke-linecap="round" stroke-linejoin="round"/></svg><div class="t" style="left:822.16px;top:820.94px;font-size:28.8px;line-height:28.8px;color:#707176;font-weight:400;font-family:'Liberation Mono', monospace;-webkit-text-stroke:0.35px currentColor;">24K</div><div class="r" style="left:892.90px;top:818.80px;width:2.10px;height:53.50px;background:#6e6f73"></div><div class="r" style="left:880.00px;top:818.80px;width:14.00px;height:2.10px;background:#6e6f73"></div><div class="r" style="left:892.90px;top:856.95px;width:274.00px;height:2.10px;background:#6e6f73"></div><div class="r" style="left:1014.20px;top:858.00px;width:2.10px;height:14.50px;background:#6e6f73"></div><div class="r" style="left:1157.40px;top:858.00px;width:2.10px;height:14.50px;background:#6e6f73"></div><div class="r" style="left:988.90px;top:828.00px;width:7.00px;height:30.00px;background:#f91a5f"></div><div class="r" style="left:1000.00px;top:824.20px;width:7.00px;height:33.80px;background:#f91a5f"></div><div class="r" style="left:1011.30px;top:823.00px;width:7.00px;height:35.00px;background:#f91a5f"></div><div class="r" style="left:1022.00px;top:826.10px;width:7.00px;height:31.90px;background:#f91a5f"></div><div class="r" style="left:1032.50px;top:831.10px;width:7.00px;height:26.90px;background:#f91a5f"></div><div class="t" style="left:1182.40px;top:822.34px;font-size:28.8px;line-height:28.8px;color:#ffffff;font-weight:400;font-family:'Liberation Mono', monospace;-webkit-text-stroke:0.35px currentColor;">~98058</div><div class="t" style="left:1566.40px;top:820.44px;font-size:28.8px;line-height:28.8px;color:#fb8a8c;font-weight:400;font-family:'Liberation Mono', monospace;-webkit-text-stroke:0.35px currentColor;">error</div><div class="t" style="left:1842.50px;top:813.94px;font-size:28.8px;line-height:43.2px;color:#f4f4f6;font-weight:400;font-family:'Liberation Mono', monospace;white-space:pre-webkit-text-stroke:0.35px currentColor;">Visa cache full: cannot add new item.</div><svg class="r" style="left:760.00px;top:943.40px;" width="18.00" height="34.00" viewBox="0 0 18 34"><polyline points="2,2 16,17.0 2,32" fill="none" stroke="#d8d9dd" stroke-width="2.4" stroke-linecap="round" stroke-linejoin="round"/></svg><div class="t" style="left:822.16px;top:945.94px;font-size:28.8px;line-height:28.8px;color:#707176;font-weight:400;font-family:'Liberation Mono', monospace;-webkit-text-stroke:0.35px currentColor;">22K</div><div class="r" style="left:892.90px;top:943.80px;width:2.10px;height:53.50px;background:#6e6f73"></div><div class="r" style="left:880.00px;top:943.80px;width:14.00px;height:2.10px;background:#6e6f73"></div><div class="r" style="left:892.90px;top:981.95px;width:274.00px;height:2.10px;background:#6e6f73"></div><div class="r" style="left:1014.20px;top:983.00px;width:2.10px;height:14.50px;background:#6e6f73"></div><div class="r" style="left:1157.40px;top:983.00px;width:2.10px;height:14.50px;background:#6e6f73"></div><div class="r" style="left:988.90px;top:953.30px;width:7.00px;height:29.70px;background:#f91a5f"></div><div class="r" style="left:1000.00px;top:949.60px;width:7.00px;height:33.40px;background:#f91a5f"></div><div class="r" style="left:1011.30px;top:947.10px;width:7.00px;height:35.90px;background:#f91a5f"></div><div class="r" style="left:1022.00px;top:944.60px;width:7.00px;height:38.40px;background:#f91a5f"></div><div class="r" style="left:1032.50px;top:952.10px;width:7.00px;height:30.90px;background:#f91a5f"></div><div class="t" style="left:1182.40px;top:947.34px;font-size:28.8px;line-height:28.8px;color:#ffffff;font-weight:400;font-family:'Liberation Mono', monospace;-webkit-text-stroke:0.35px currentColor;">~97360</div><div class="t" style="left:1566.40px;top:945.44px;font-size:28.8px;line-height:28.8px;color:#fb8a8c;font-weight:400;font-family:'Liberation Mono', monospace;-webkit-text-stroke:0.35px currentColor;">error</div><div class="t" style="left:1842.50px;top:938.94px;font-size:28.8px;line-height:43.2px;color:#f4f4f6;font-weight:400;font-family:'Liberation Mono', monospace;white-space:pre-webkit-text-stroke:0.35px currentColor;">{"error":{"code":13,"details":"failed to charge card: could not charge the card: rpc error: code = Unknown desc = Visa cache<br>full: cannot add new item.","metadata":{"content-type":["application/grpc"]}},"message":"Failed to place order {\"error\":<br>{\"code\":13,\"details\":\"failed to charge card: could not charge the card: rpc error: code = Unknown desc = Visa cache<br>full: cannot add new item.\",\"metadata\":{\"content-type\":[\"application/grpc\"]}}}"}</div><svg class="r" style="left:760.00px;top:1120.30px;" width="18.00" height="34.00" viewBox="0 0 18 34"><polyline points="2,2 16,17.0 2,32" fill="none" stroke="#d8d9dd" stroke-width="2.4" stroke-linecap="round" stroke-linejoin="round"/></svg><div class="t" style="left:822.16px;top:1122.84px;font-size:28.8px;line-height:28.8px;color:#707176;font-weight:400;font-family:'Liberation Mono', monospace;-webkit-text-stroke:0.35px currentColor;">22K</div><div class="r" style="left:892.90px;top:1120.70px;width:2.10px;height:53.50px;background:#6e6f73"></div><div class="r" style="left:880.00px;top:1120.70px;width:14.00px;height:2.10px;background:#6e6f73"></div><div class="r" style="left:892.90px;top:1158.85px;width:274.00px;height:2.10px;background:#6e6f73"></div><div class="r" style="left:1014.20px;top:1159.90px;width:2.10px;height:14.50px;background:#6e6f73"></div><div class="r" style="left:1157.40px;top:1159.90px;width:2.10px;height:14.50px;background:#6e6f73"></div><div class="r" style="left:988.90px;top:1132.30px;width:7.00px;height:27.60px;background:#f91a5f"></div><div class="r" style="left:1000.00px;top:1123.60px;width:7.00px;height:36.30px;background:#f91a5f"></div><div class="r" style="left:1011.30px;top:1123.60px;width:7.00px;height:36.30px;background:#f91a5f"></div><div class="r" style="left:1022.00px;top:1123.60px;width:7.00px;height:36.30px;background:#f91a5f"></div><div class="r" style="left:1032.50px;top:1129.20px;width:7.00px;height:30.70px;background:#f91a5f"></div><div class="t" style="left:1182.40px;top:1124.24px;font-size:28.8px;line-height:28.8px;color:#ffffff;font-weight:400;font-family:'Liberation Mono', monospace;-webkit-text-stroke:0.35px currentColor;">~97069</div><div class="t" style="left:1566.40px;top:1122.34px;font-size:28.8px;line-height:28.8px;color:#fb8a8c;font-weight:400;font-family:'Liberation Mono', monospace;-webkit-text-stroke:0.35px currentColor;">error</div><div class="t" style="left:1842.50px;top:1115.84px;font-size:28.8px;line-height:43.2px;color:#f4f4f6;font-weight:400;font-family:'Liberation Mono', monospace;white-space:pre-webkit-text-stroke:0.35px currentColor;"><span style="font-size:20px;font-weight:700;vertical-align:1px">×</span> {"code":13,"details":"failed to charge card: could not charge the card: rpc error: code = Unknown desc = Visa cache full:<br>cannot add new item.","metadata":{"content-type":["application/grpc"]}}</div><svg class="r" style="left:760.00px;top:1245.30px;" width="18.00" height="34.00" viewBox="0 0 18 34"><polyline points="2,2 16,17.0 2,32" fill="none" stroke="#d8d9dd" stroke-width="2.4" stroke-linecap="round" stroke-linejoin="round"/></svg><div class="t" style="left:822.16px;top:1247.84px;font-size:28.8px;line-height:28.8px;color:#707176;font-weight:400;font-family:'Liberation Mono', monospace;-webkit-text-stroke:0.35px currentColor;">22K</div><div class="r" style="left:892.90px;top:1245.70px;width:2.10px;height:53.50px;background:#6e6f73"></div><div class="r" style="left:880.00px;top:1245.70px;width:14.00px;height:2.10px;background:#6e6f73"></div><div class="r" style="left:892.90px;top:1283.85px;width:274.00px;height:2.10px;background:#6e6f73"></div><div class="r" style="left:1014.20px;top:1284.90px;width:2.10px;height:14.50px;background:#6e6f73"></div><div class="r" style="left:1157.40px;top:1284.90px;width:2.10px;height:14.50px;background:#6e6f73"></div><div class="r" style="left:988.90px;top:1254.00px;width:7.00px;height:30.90px;background:#f91a5f"></div><div class="r" style="left:1000.00px;top:1255.20px;width:7.00px;height:29.70px;background:#f91a5f"></div><div class="r" style="left:1011.30px;top:1248.30px;width:7.00px;height:36.60px;background:#f91a5f"></div><div class="r" style="left:1022.00px;top:1247.10px;width:7.00px;height:37.80px;background:#f91a5f"></div><div class="r" style="left:1032.50px;top:1256.40px;width:7.00px;height:28.50px;background:#f91a5f"></div><div class="t" style="left:1182.40px;top:1249.24px;font-size:28.8px;line-height:28.8px;color:#ffffff;font-weight:400;font-family:'Liberation Mono', monospace;-webkit-text-stroke:0.35px currentColor;">~95441</div><div class="t" style="left:1566.40px;top:1247.34px;font-size:28.8px;line-height:28.8px;color:#fb8a8c;font-weight:400;font-family:'Liberation Mono', monospace;-webkit-text-stroke:0.35px currentColor;">error</div><div class="t" style="left:1842.50px;top:1240.84px;font-size:28.8px;line-height:43.2px;color:#f4f4f6;font-weight:400;font-family:'Liberation Mono', monospace;white-space:pre-webkit-text-stroke:0.35px currentColor;">Failed to place order</div><svg class="r" style="left:760.00px;top:1370.30px;" width="18.00" height="34.00" viewBox="0 0 18 34"><polyline points="2,2 16,17.0 2,32" fill="none" stroke="#d8d9dd" stroke-width="2.4" stroke-linecap="round" stroke-linejoin="round"/></svg><div class="t" style="left:822.16px;top:1372.84px;font-size:28.8px;line-height:28.8px;color:#707176;font-weight:400;font-family:'Liberation Mono', monospace;-webkit-text-stroke:0.35px currentColor;">180</div><div class="r" style="left:892.90px;top:1370.70px;width:2.10px;height:53.50px;background:#6e6f73"></div><div class="r" style="left:880.00px;top:1370.70px;width:14.00px;height:2.10px;background:#6e6f73"></div><div class="r" style="left:892.90px;top:1408.85px;width:274.00px;height:2.10px;background:#6e6f73"></div><div class="r" style="left:1014.20px;top:1409.90px;width:2.10px;height:14.50px;background:#6e6f73"></div><div class="r" style="left:1157.40px;top:1409.90px;width:2.10px;height:14.50px;background:#6e6f73"></div><div class="r" style="left:1044.20px;top:1372.90px;width:7.00px;height:37.00px;background:#f91a5f"></div><div class="t" style="left:1182.40px;top:1374.24px;font-size:28.8px;line-height:28.8px;color:#ffffff;font-weight:400;font-family:'Liberation Mono', monospace;-webkit-text-stroke:0.35px currentColor;">~174</div><div class="t" style="left:1566.40px;top:1372.34px;font-size:28.8px;line-height:28.8px;color:#fb8a8c;font-weight:400;font-family:'Liberation Mono', monospace;-webkit-text-stroke:0.35px currentColor;">error</div><div class="t" style="left:1842.50px;top:1365.84px;font-size:28.8px;line-height:43.2px;color:#f4f4f6;font-weight:400;font-family:'Liberation Mono', monospace;white-space:pre-webkit-text-stroke:0.35px currentColor;"><span style="font-size:20px;font-weight:700;vertical-align:1px">×</span> {"code":13,"details":"failed to charge card: could not charge the card: rpc error: code = Unavailable desc = connection<br>error: desc = \"transport: Error while dialing: dial tcp 34.118.225.171:8080: connect: connection refused\"","metadata":<br>{"content-type":["application/grpc"]}}</div><svg class="r" style="left:760.00px;top:1504.00px;" width="18.00" height="34.00" viewBox="0 0 18 34"><polyline points="2,2 16,17.0 2,32" fill="none" stroke="#d8d9dd" stroke-width="2.4" stroke-linecap="round" stroke-linejoin="round"/></svg><div class="t" style="left:839.44px;top:1506.54px;font-size:28.8px;line-height:28.8px;color:#707176;font-weight:400;font-family:'Liberation Mono', monospace;-webkit-text-stroke:0.35px currentColor;">60</div><div class="r" style="left:892.90px;top:1504.40px;width:2.10px;height:53.50px;background:#6e6f73"></div><div class="r" style="left:880.00px;top:1504.40px;width:14.00px;height:2.10px;background:#6e6f73"></div><div class="r" style="left:892.90px;top:1542.55px;width:274.00px;height:2.10px;background:#6e6f73"></div><div class="r" style="left:1014.20px;top:1543.60px;width:2.10px;height:14.50px;background:#6e6f73"></div><div class="r" style="left:1157.40px;top:1543.60px;width:2.10px;height:14.50px;background:#6e6f73"></div><div class="r" style="left:1000.00px;top:1506.60px;width:7.00px;height:37.00px;background:#f91a5f"></div><div class="r" style="left:1022.00px;top:1506.60px;width:7.00px;height:37.00px;background:#f91a5f"></div><div class="r" style="left:1099.40px;top:1506.60px;width:7.00px;height:37.00px;background:#f91a5f"></div><div class="t" style="left:1182.40px;top:1507.94px;font-size:28.8px;line-height:28.8px;color:#ffffff;font-weight:400;font-family:'Liberation Mono', monospace;-webkit-text-stroke:0.35px currentColor;">~174</div><div class="t" style="left:1566.40px;top:1506.04px;font-size:28.8px;line-height:28.8px;color:#fb8a8c;font-weight:400;font-family:'Liberation Mono', monospace;-webkit-text-stroke:0.35px currentColor;">error</div><div class="t" style="left:1842.50px;top:1499.54px;font-size:28.8px;line-height:43.2px;color:#f4f4f6;font-weight:400;font-family:'Liberation Mono', monospace;white-space:pre-webkit-text-stroke:0.35px currentColor;"><span style="font-size:20px;font-weight:700;vertical-align:1px">×</span> {"code":13,"details":"failed to charge card: could not charge the card: rpc error: code = Unknown desc = The credit card<br>(ending &lt;*&gt; expired on &lt;*&gt;</div><svg class="r" style="left:760.00px;top:1629.00px;" width="18.00" height="34.00" viewBox="0 0 18 34"><polyline points="2,2 16,17.0 2,32" fill="none" stroke="#d8d9dd" stroke-width="2.4" stroke-linecap="round" stroke-linejoin="round"/></svg><div class="t" style="left:822.16px;top:1631.54px;font-size:28.8px;line-height:28.8px;color:#707176;font-weight:400;font-family:'Liberation Mono', monospace;-webkit-text-stroke:0.35px currentColor;">120</div><div class="r" style="left:892.90px;top:1629.40px;width:2.10px;height:53.50px;background:#6e6f73"></div><div class="r" style="left:880.00px;top:1629.40px;width:14.00px;height:2.10px;background:#6e6f73"></div><div class="r" style="left:892.90px;top:1667.55px;width:274.00px;height:2.10px;background:#6e6f73"></div><div class="r" style="left:1014.20px;top:1668.60px;width:2.10px;height:14.50px;background:#6e6f73"></div><div class="r" style="left:1157.40px;top:1668.60px;width:2.10px;height:14.50px;background:#6e6f73"></div><div class="r" style="left:1044.20px;top:1631.60px;width:7.00px;height:37.00px;background:#f91a5f"></div><div class="t" style="left:1182.40px;top:1632.94px;font-size:28.8px;line-height:28.8px;color:#ffffff;font-weight:400;font-family:'Liberation Mono', monospace;-webkit-text-stroke:0.35px currentColor;">~116</div><div class="t" style="left:1566.40px;top:1631.04px;font-size:28.8px;line-height:28.8px;color:#fb8a8c;font-weight:400;font-family:'Liberation Mono', monospace;-webkit-text-stroke:0.35px currentColor;">error</div><div class="t" style="left:1842.50px;top:1624.54px;font-size:28.8px;line-height:43.2px;color:#f4f4f6;font-weight:400;font-family:'Liberation Mono', monospace;white-space:pre-webkit-text-stroke:0.35px currentColor;">{"code":13,"details":"failed to charge card: could not charge the card: rpc error: code = Unavailable desc = connection<br>error: desc = \"transport: Error while dialing: dial tcp 34.118.225.171:8080: connect: connection refused\"","metadata":<br>{"content-type":["application/grpc"]}}</div><svg class="r" style="left:760.00px;top:1762.70px;" width="18.00" height="34.00" viewBox="0 0 18 34"><polyline points="2,2 16,17.0 2,32" fill="none" stroke="#d8d9dd" stroke-width="2.4" stroke-linecap="round" stroke-linejoin="round"/></svg><div class="t" style="left:839.44px;top:1765.24px;font-size:28.8px;line-height:28.8px;color:#707176;font-weight:400;font-family:'Liberation Mono', monospace;-webkit-text-stroke:0.35px currentColor;">60</div><div class="r" style="left:892.90px;top:1763.10px;width:2.10px;height:53.50px;background:#6e6f73"></div><div class="r" style="left:880.00px;top:1763.10px;width:14.00px;height:2.10px;background:#6e6f73"></div><div class="r" style="left:892.90px;top:1801.25px;width:274.00px;height:2.10px;background:#6e6f73"></div><div class="r" style="left:1014.20px;top:1802.30px;width:2.10px;height:14.50px;background:#6e6f73"></div><div class="r" style="left:1157.40px;top:1802.30px;width:2.10px;height:14.50px;background:#6e6f73"></div><div class="r" style="left:956.00px;top:1765.60px;width:7.00px;height:36.70px;background:#f91a5f"></div><div class="r" style="left:966.90px;top:1765.60px;width:7.00px;height:36.70px;background:#f91a5f"></div><div class="t" style="left:1182.40px;top:1766.64px;font-size:28.8px;line-height:28.8px;color:#ffffff;font-weight:400;font-family:'Liberation Mono', monospace;-webkit-text-stroke:0.35px currentColor;">~116</div><div class="t" style="left:1566.40px;top:1764.74px;font-size:28.8px;line-height:28.8px;color:#fb8a8c;font-weight:400;font-family:'Liberation Mono', monospace;-webkit-text-stroke:0.35px currentColor;">error</div><div class="t" style="left:1842.50px;top:1758.24px;font-size:28.8px;line-height:43.2px;color:#f4f4f6;font-weight:400;font-family:'Liberation Mono', monospace;white-space:pre-webkit-text-stroke:0.35px currentColor;">{"code":13,"details":"failed to charge card: could not charge the card: rpc error: code = Unknown desc = The credit card<br>(ending &lt;*&gt; expired on 4/2025.","metadata":{"content-type":["application/grpc"]}}</div><svg class="r" style="left:760.00px;top:1887.70px;" width="18.00" height="34.00" viewBox="0 0 18 34"><polyline points="2,2 16,17.0 2,32" fill="none" stroke="#d8d9dd" stroke-width="2.4" stroke-linecap="round" stroke-linejoin="round"/></svg><div class="t" style="left:839.44px;top:1890.24px;font-size:28.8px;line-height:28.8px;color:#707176;font-weight:400;font-family:'Liberation Mono', monospace;-webkit-text-stroke:0.35px currentColor;">60</div><div class="r" style="left:892.90px;top:1888.10px;width:2.10px;height:53.50px;background:#6e6f73"></div><div class="r" style="left:880.00px;top:1888.10px;width:14.00px;height:2.10px;background:#6e6f73"></div><div class="r" style="left:892.90px;top:1926.25px;width:274.00px;height:2.10px;background:#6e6f73"></div><div class="r" style="left:1014.20px;top:1927.30px;width:2.10px;height:14.50px;background:#6e6f73"></div><div class="r" style="left:1157.40px;top:1927.30px;width:2.10px;height:14.50px;background:#6e6f73"></div><div class="r" style="left:1055.00px;top:1890.20px;width:7.00px;height:37.10px;background:#f91a5f"></div><div class="r" style="left:1099.40px;top:1890.20px;width:7.00px;height:37.10px;background:#f91a5f"></div><div class="t" style="left:1182.40px;top:1891.64px;font-size:28.8px;line-height:28.8px;color:#ffffff;font-weight:400;font-family:'Liberation Mono', monospace;-webkit-text-stroke:0.35px currentColor;">~116</div><div class="t" style="left:1566.40px;top:1889.74px;font-size:28.8px;line-height:28.8px;color:#fb8a8c;font-weight:400;font-family:'Liberation Mono', monospace;-webkit-text-stroke:0.35px currentColor;">error</div><div class="t" style="left:1842.50px;top:1883.24px;font-size:28.8px;line-height:43.2px;color:#f4f4f6;font-weight:400;font-family:'Liberation Mono', monospace;white-space:pre-webkit-text-stroke:0.35px currentColor;">The credit card (ending &lt;*&gt; expired on &lt;*&gt;</div><svg class="r" style="left:760.00px;top:2013.40px;" width="18.00" height="34.00" viewBox="0 0 18 34"><polyline points="2,2 16,17.0 2,32" fill="none" stroke="#d8d9dd" stroke-width="2.4" stroke-linecap="round" stroke-linejoin="round"/></svg><div class="t" style="left:839.44px;top:2015.94px;font-size:28.8px;line-height:28.8px;color:#707176;font-weight:400;font-family:'Liberation Mono', monospace;-webkit-text-stroke:0.35px currentColor;">60</div><div class="r" style="left:892.90px;top:2013.80px;width:2.10px;height:53.50px;background:#6e6f73"></div><div class="r" style="left:880.00px;top:2013.80px;width:14.00px;height:2.10px;background:#6e6f73"></div><div class="r" style="left:892.90px;top:2051.95px;width:274.00px;height:2.10px;background:#6e6f73"></div><div class="r" style="left:1014.20px;top:2053.00px;width:2.10px;height:14.50px;background:#6e6f73"></div><div class="r" style="left:1157.40px;top:2053.00px;width:2.10px;height:14.50px;background:#6e6f73"></div><div class="r" style="left:989.40px;top:2015.50px;width:7.00px;height:37.50px;background:#f91a5f"></div><div class="t" style="left:1182.40px;top:2017.34px;font-size:28.8px;line-height:28.8px;color:#ffffff;font-weight:400;font-family:'Liberation Mono', monospace;-webkit-text-stroke:0.35px currentColor;">~58</div><div class="t" style="left:1566.40px;top:2015.44px;font-size:28.8px;line-height:28.8px;color:#fb8a8c;font-weight:400;font-family:'Liberation Mono', monospace;-webkit-text-stroke:0.35px currentColor;">error</div><div class="t" style="left:1842.50px;top:2008.94px;font-size:28.8px;line-height:43.2px;color:#f4f4f6;font-weight:400;font-family:'Liberation Mono', monospace;white-space:pre-webkit-text-stroke:0.35px currentColor;">{"level":"error","span_id":"0c11220615ba4642","trace_flags":"01","trace_id":"14e45d51f795525526a9b1bb8fc7f9bf"}</div><svg class="r" style="left:760.00px;top:2138.15px;" width="18.00" height="34.00" viewBox="0 0 18 34"><polyline points="2,2 16,17.0 2,32" fill="none" stroke="#d8d9dd" stroke-width="2.4" stroke-linecap="round" stroke-linejoin="round"/></svg><div class="t" style="left:839.44px;top:2140.69px;font-size:28.8px;line-height:28.8px;color:#707176;font-weight:400;font-family:'Liberation Mono', monospace;-webkit-text-stroke:0.35px currentColor;">60</div><div class="r" style="left:892.90px;top:2138.55px;width:2.10px;height:53.50px;background:#6e6f73"></div><div class="r" style="left:880.00px;top:2138.55px;width:14.00px;height:2.10px;background:#6e6f73"></div><div class="r" style="left:892.90px;top:2176.70px;width:274.00px;height:2.10px;background:#6e6f73"></div><div class="r" style="left:1014.20px;top:2177.75px;width:2.10px;height:14.50px;background:#6e6f73"></div><div class="r" style="left:1157.40px;top:2177.75px;width:2.10px;height:14.50px;background:#6e6f73"></div><div class="r" style="left:1022.00px;top:2140.60px;width:7.00px;height:37.15px;background:#f91a5f"></div><div class="t" style="left:1182.40px;top:2142.09px;font-size:28.8px;line-height:28.8px;color:#ffffff;font-weight:400;font-family:'Liberation Mono', monospace;-webkit-text-stroke:0.35px currentColor;">~58</div><div class="t" style="left:1566.40px;top:2140.19px;font-size:28.8px;line-height:28.8px;color:#fb8a8c;font-weight:400;font-family:'Liberation Mono', monospace;-webkit-text-stroke:0.35px currentColor;">error</div><div class="t" style="left:1842.50px;top:2133.69px;font-size:28.8px;line-height:43.2px;color:#f4f4f6;font-weight:400;font-family:'Liberation Mono', monospace;white-space:pre-webkit-text-stroke:0.35px currentColor;">{"level":"error","span_id":"eb870ecef063bbb4","trace_flags":"01","trace_id":"521ef8dac011ad89f432d2291fe97409"}</div><svg class="r" style="left:760.00px;top:2262.90px;" width="18.00" height="34.00" viewBox="0 0 18 34"><polyline points="2,2 16,17.0 2,32" fill="none" stroke="#d8d9dd" stroke-width="2.4" stroke-linecap="round" stroke-linejoin="round"/></svg><div class="t" style="left:839.44px;top:2265.44px;font-size:28.8px;line-height:28.8px;color:#707176;font-weight:400;font-family:'Liberation Mono', monospace;-webkit-text-stroke:0.35px currentColor;">60</div><div class="r" style="left:892.90px;top:2263.30px;width:2.10px;height:53.50px;background:#6e6f73"></div><div class="r" style="left:880.00px;top:2263.30px;width:14.00px;height:2.10px;background:#6e6f73"></div><div class="r" style="left:892.90px;top:2301.45px;width:274.00px;height:2.10px;background:#6e6f73"></div><div class="r" style="left:1014.20px;top:2302.50px;width:2.10px;height:14.50px;background:#6e6f73"></div><div class="r" style="left:1157.40px;top:2302.50px;width:2.10px;height:14.50px;background:#6e6f73"></div><div class="r" style="left:1022.00px;top:2265.30px;width:7.00px;height:37.20px;background:#f91a5f"></div><div class="t" style="left:1182.40px;top:2266.84px;font-size:28.8px;line-height:28.8px;color:#ffffff;font-weight:400;font-family:'Liberation Mono', monospace;-webkit-text-stroke:0.35px currentColor;">~58</div><div class="t" style="left:1566.40px;top:2264.94px;font-size:28.8px;line-height:28.8px;color:#fb8a8c;font-weight:400;font-family:'Liberation Mono', monospace;-webkit-text-stroke:0.35px currentColor;">error</div><div class="t" style="left:1842.50px;top:2258.44px;font-size:28.8px;line-height:43.2px;color:#f4f4f6;font-weight:400;font-family:'Liberation Mono', monospace;white-space:pre-webkit-text-stroke:0.35px currentColor;">{"level":"error","span_id":"6b64c6c58842bf30","trace_flags":"01","trace_id":"7770222d48c7a392bbe5f17852c9073c"}</div><svg class="r" style="left:760.00px;top:2387.65px;" width="18.00" height="34.00" viewBox="0 0 18 34"><polyline points="2,2 16,17.0 2,32" fill="none" stroke="#d8d9dd" stroke-width="2.4" stroke-linecap="round" stroke-linejoin="round"/></svg><div class="t" style="left:839.44px;top:2390.19px;font-size:28.8px;line-height:28.8px;color:#707176;font-weight:400;font-family:'Liberation Mono', monospace;-webkit-text-stroke:0.35px currentColor;">60</div><div class="r" style="left:892.90px;top:2388.05px;width:2.10px;height:53.50px;background:#6e6f73"></div><div class="r" style="left:880.00px;top:2388.05px;width:14.00px;height:2.10px;background:#6e6f73"></div><div class="r" style="left:892.90px;top:2426.20px;width:274.00px;height:2.10px;background:#6e6f73"></div><div class="r" style="left:1014.20px;top:2427.25px;width:2.10px;height:14.50px;background:#6e6f73"></div><div class="r" style="left:1157.40px;top:2427.25px;width:2.10px;height:14.50px;background:#6e6f73"></div><div class="r" style="left:1000.00px;top:2389.60px;width:7.00px;height:37.65px;background:#f91a5f"></div><div class="t" style="left:1182.40px;top:2391.59px;font-size:28.8px;line-height:28.8px;color:#ffffff;font-weight:400;font-family:'Liberation Mono', monospace;-webkit-text-stroke:0.35px currentColor;">~58</div><div class="t" style="left:1566.40px;top:2389.69px;font-size:28.8px;line-height:28.8px;color:#fb8a8c;font-weight:400;font-family:'Liberation Mono', monospace;-webkit-text-stroke:0.35px currentColor;">error</div><div class="t" style="left:1842.50px;top:2383.19px;font-size:28.8px;line-height:43.2px;color:#f4f4f6;font-weight:400;font-family:'Liberation Mono', monospace;white-space:pre-webkit-text-stroke:0.35px currentColor;">{"level":"error","span_id":"cddc331329e66de1","trace_flags":"01","trace_id":"eaa77f852131d687bed1e89354c469d9"}</div><svg class="r" style="left:760.00px;top:2512.40px;" width="18.00" height="34.00" viewBox="0 0 18 34"><polyline points="2,2 16,17.0 2,32" fill="none" stroke="#d8d9dd" stroke-width="2.4" stroke-linecap="round" stroke-linejoin="round"/></svg><div class="t" style="left:839.44px;top:2514.94px;font-size:28.8px;line-height:28.8px;color:#707176;font-weight:400;font-family:'Liberation Mono', monospace;-webkit-text-stroke:0.35px currentColor;">60</div><div class="r" style="left:892.90px;top:2512.80px;width:2.10px;height:53.50px;background:#6e6f73"></div><div class="r" style="left:880.00px;top:2512.80px;width:14.00px;height:2.10px;background:#6e6f73"></div><div class="r" style="left:892.90px;top:2550.95px;width:274.00px;height:2.10px;background:#6e6f73"></div><div class="r" style="left:1014.20px;top:2552.00px;width:2.10px;height:14.50px;background:#6e6f73"></div><div class="r" style="left:1157.40px;top:2552.00px;width:2.10px;height:14.50px;background:#6e6f73"></div><div class="r" style="left:1000.00px;top:2514.30px;width:7.00px;height:37.70px;background:#f91a5f"></div><div class="t" style="left:1182.40px;top:2516.34px;font-size:28.8px;line-height:28.8px;color:#ffffff;font-weight:400;font-family:'Liberation Mono', monospace;-webkit-text-stroke:0.35px currentColor;">~58</div><div class="t" style="left:1566.40px;top:2514.44px;font-size:28.8px;line-height:28.8px;color:#fb8a8c;font-weight:400;font-family:'Liberation Mono', monospace;-webkit-text-stroke:0.35px currentColor;">error</div><div class="t" style="left:1842.50px;top:2507.94px;font-size:28.8px;line-height:43.2px;color:#f4f4f6;font-weight:400;font-family:'Liberation Mono', monospace;white-space:pre-webkit-text-stroke:0.35px currentColor;">{"level":"error","span_id":"334357bae9ed6ad2","trace_flags":"01","trace_id":"46f1e6fb41f9415e1f6b2fe1423bbeab"}</div><div class="r" style="left:0.00px;top:0.00px;width:4026.00px;height:1.30px;background:#423f4c"></div><div class="r" style="left:4024.60px;top:0.00px;width:1.40px;height:2594.00px;background:#58585c"></div><div class="r" style="left:0.00px;top:2592.70px;width:4026.00px;height:1.30px;background:#4a4b50"></div><div class="r" style="left:0.00px;top:0.00px;width:1.30px;height:2594.00px;background:#3e3d48"></div><svg class="r" style="left:4006.00px;top:2574.00px;" width="20.00" height="20.00" viewBox="0 0 20 20"><path d="M20 0 V6 A14 14 0 0 1 6 20 H20 Z" fill="#b3b3b3"/><path d="M20 6 A14 14 0 0 1 6 20" fill="none" stroke="#111" stroke-width="1.2" stroke-dasharray="1.5 1.2"/></svg></body></html>
